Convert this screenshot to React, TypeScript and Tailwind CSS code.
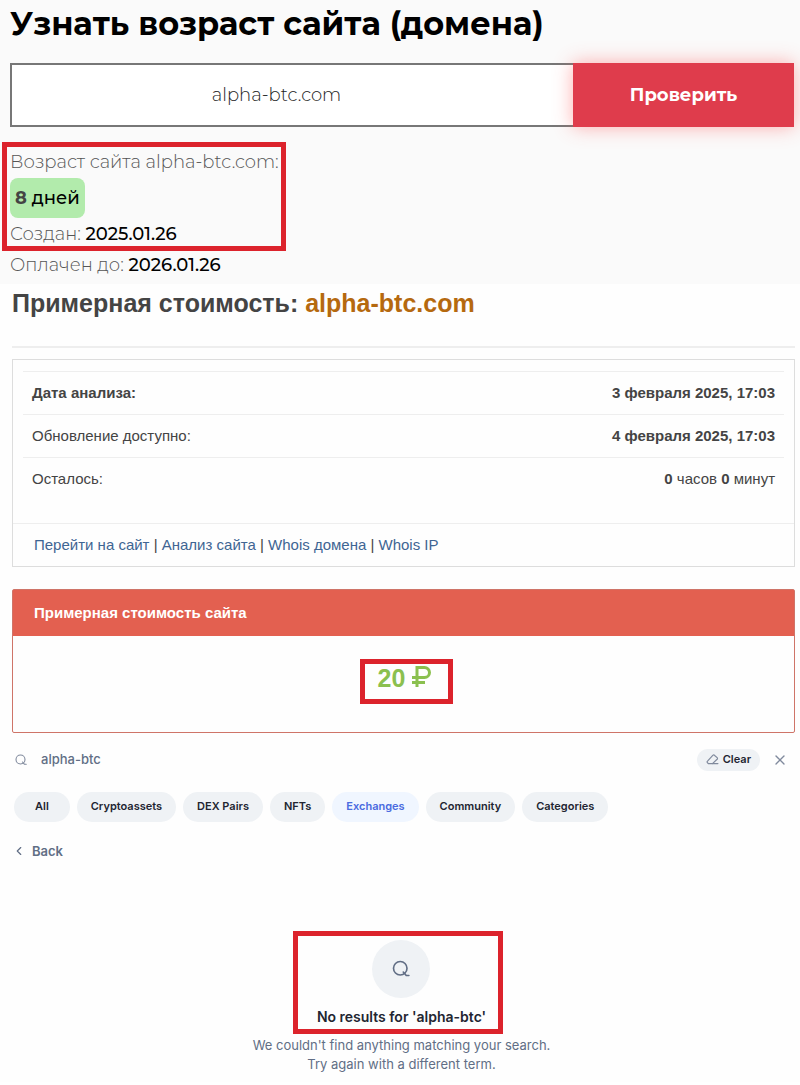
import { useState } from 'react';
import { ChevronLeft, X } from 'lucide-react';
import clsx from 'clsx';

const TABS = ['All', 'Cryptoassets', 'DEX Pairs', 'NFTs', 'Exchanges', 'Community', 'Categories'];

const LINKS = ['Перейти на сайт', 'Анализ сайта', 'Whois домена', 'Whois IP'];

function SearchIcon({ className }: { className?: string }) {
  return (
    <svg
      viewBox="0 0 24 24"
      fill="none"
      stroke="currentColor"
      strokeWidth="2.2"
      strokeLinecap="round"
      strokeLinejoin="round"
      className={className}
      aria-hidden="true"
    >
      <circle cx="11" cy="11" r="9" />
      <path d="m15 16 4 4.600h3.500" />
    </svg>
  );
}

function EraserIcon({ className }: { className?: string }) {
  return (
    <svg
      viewBox="0 0 24 20"
      fill="none"
      stroke="currentColor"
      strokeWidth="2.2"
      strokeLinecap="round"
      strokeLinejoin="round"
      className={className}
      aria-hidden="true"
    >
      <path d="M12.500 2.500 2.800 13c-1 1-1 2 0 3l1.500 1.500h7.700L20.500 9.500c1-1 1-2 0-3l-4.500-4c-1-1-2.500-1-3.500 0Z" />
      <path d="M12 17.500h10" />
    </svg>
  );
}

function RubleIcon({ className }: { className?: string }) {
  return (
    <svg
      viewBox="0 0 19 21"
      fill="none"
      stroke="currentColor"
      strokeWidth="3"
      className={className}
      role="img"
      aria-label="₽"
    >
      <path d="M5 21V1.500h7.500a5 5 0 0 1 0 10H0M0 16.500h13" />
    </svg>
  );
}

function DomainAge() {
  const [domain, setDomain] = useState('alpha-btc.com');

  return (
    <section className="bg-[#fafafa] pt-1 pb-[7px] font-['Montserrat','Inter',sans-serif] text-lg text-[#555]">
      <h1 className="px-[10px] text-[32px] leading-10 font-bold text-black">
        Узнать возраст сайта (домена)
      </h1>

      <form className="mt-[19px] mr-[6px] ml-[10px] flex h-16" onSubmit={(e) => e.preventDefault()}>
        <input
          aria-label="Домен"
          className="min-w-0 flex-1 border-2 border-r-0 border-[#777] bg-white pr-8 text-center text-lg font-light text-[#222] outline-none"
          value={domain}
          onChange={(e) => setDomain(e.target.value)}
        />
        <button
          type="submit"
          className="w-[221px] bg-[#df3c4c] text-lg font-bold text-white shadow-[0_0_18px_rgba(255,80,80,0.45)]"
        >
          Проверить
        </button>
      </form>

      <div className="mt-[15px] ml-[2px] w-[284px] border-5 border-[#dc232c] px-[3px] pt-[3px] whitespace-nowrap">
        <p className="leading-6 font-light">Возраст сайта alpha-btc.com:</p>
        <p className="mt-1 w-fit rounded-lg bg-[#b2ebac] px-[5px] py-2 leading-6 font-medium text-black">
          <b className="text-[#444]">8</b> дней
        </p>
        <p className="mt-1 leading-6 font-light">
          Создан: <span className="font-medium text-black">2025.01.26</span>
        </p>
      </div>
      <p className="mt-[2px] px-[10px] leading-6 font-light">
        Оплачен до: <span className="font-medium text-black">2026.01.26</span>
      </p>
    </section>
  );
}

function SiteValue() {
  return (
    <section className="pr-[5px] pl-3 font-['Liberation_Sans',Arial,sans-serif] text-[15px] text-[#444]">
      <h2 className="border-b-2 border-[#eee] pt-[3px] pb-[27px] text-[25px] leading-8 font-bold">
        Примерная стоимость: <span className="text-[#b5690f]">alpha-btc.com</span>
      </h2>

      <div className="mt-[11px] border border-[#ddd]">
        <div className="px-[10px] pt-[11px] pb-[22px]">
          <table className="w-full">
            <tbody>
              <tr className="h-[43px] border-t border-[#eee] font-bold">
                <td className="pl-[9px]">Дата анализа:</td>
                <td className="pr-[9px] text-right">3 февраля 2025, 17:03</td>
              </tr>
              <tr className="h-[43px] border-t border-[#eee]">
                <td className="pl-[9px]">Обновление доступно:</td>
                <td className="pr-[9px] text-right font-bold">4 февраля 2025, 17:03</td>
              </tr>
              <tr className="h-[43px] border-t border-[#eee]">
                <td className="pl-[9px]">Осталось:</td>
                <td className="pr-[9px] text-right">
                  <b>0</b> часов <b>0</b> минут
                </td>
              </tr>
            </tbody>
          </table>
        </div>
        <div className="border-t border-[#eee] px-[21px] py-[10px] leading-[22px]">
          {LINKS.map((label, i) => (
            <span key={label}>
              {i > 0 && ' | '}
              <a href="#" className="text-[#3f6593]">
                {label}
              </a>
            </span>
          ))}
        </div>
      </div>

      <div className="mt-[22px] rounded-xs border border-[#cf7468]">
        <h3 className="bg-[#e36050] px-[21px] py-3 leading-[22px] font-bold text-white">
          Примерная стоимость сайта
        </h3>
        <div className="flex h-24 items-start justify-center pt-[23px]">
          <p className="mr-[-6px] flex h-[45px] w-[93px] justify-center gap-[7px] border-5 border-[#dc232c] pr-1 text-[25px] leading-7 font-bold text-[#8bc04f]">
            20
            <RubleIcon className="mt-[2px] h-[21px] w-[19px]" />
          </p>
        </div>
      </div>
    </section>
  );
}

function CoinSearch() {
  const [query, setQuery] = useState('alpha-btc');
  const [tab, setTab] = useState('Exchanges');

  return (
    <section className="pt-4 pb-2 font-['Inter',sans-serif] text-xs text-[#222531]">
      <div className="flex items-center pr-3 pl-[15px]">
        <SearchIcon className="size-3 text-[#808a9d]" />
        <input
          aria-label="Search"
          className="ml-[14px] min-w-0 flex-1 text-[13px] font-medium text-[#616e85] outline-none"
          value={query}
          onChange={(e) => setQuery(e.target.value)}
        />
        <button
          type="button"
          className="flex h-[22px] items-center gap-1 rounded-full bg-[#eff2f5] px-[9px] text-[11px] font-semibold"
          onClick={() => setQuery('')}
        >
          <EraserIcon className="h-[11px] w-[13px] text-[#808a9d]" />
          Clear
        </button>
        <button type="button" aria-label="Close" className="ml-3 text-[#808a9d]">
          <X size={16} />
        </button>
      </div>

      <div className="mt-[21px] flex gap-[7px] pl-[14px]">
        {TABS.map((name) => (
          <button
            key={name}
            type="button"
            className={clsx(
              'h-[30px] rounded-full text-[11px] font-semibold',
              name === 'All' ? 'px-[21px]' : 'px-[14px]',
              tab === name ? 'bg-[#f0f6ff] text-[#4a6be0]' : 'bg-[#eff2f5]'
            )}
            onClick={() => setTab(name)}
          >
            {name}
          </button>
        ))}
      </div>

      <button
        type="button"
        className="mt-[21px] ml-3 flex items-center gap-[6px] text-[13px] font-semibold text-[#616e85]"
      >
        <ChevronLeft size={14} />
        Back
      </button>

      <div className="mt-[71px] ml-[3px] flex flex-col items-center text-[#616e85]">
        <div className="relative flex flex-col items-center px-6 pt-[9px] pb-[7px]">
          <span className="flex size-[58px] items-center justify-center rounded-full bg-[#eff2f5]">
            <SearchIcon className="size-[18px]" />
          </span>
          <p className="mt-[9px] text-sm leading-5 font-semibold text-[#222531]">
            No results for &#39;alpha-btc&#39;
          </p>
          <div className="pointer-events-none absolute inset-y-0 right-[7px] left-0 border-5 border-[#dc232c]" />
        </div>
        <p className="mt-[2px] text-center text-[13px] leading-[19px]">
          We couldn&#39;t find anything matching your search.
          <br />
          Try again with a different term.
        </p>
      </div>
    </section>
  );
}

export default function App() {
  return (
    <main className="bg-[#fefefe]">
      <DomainAge />
      <SiteValue />
      <CoinSearch />
    </main>
  );
}
